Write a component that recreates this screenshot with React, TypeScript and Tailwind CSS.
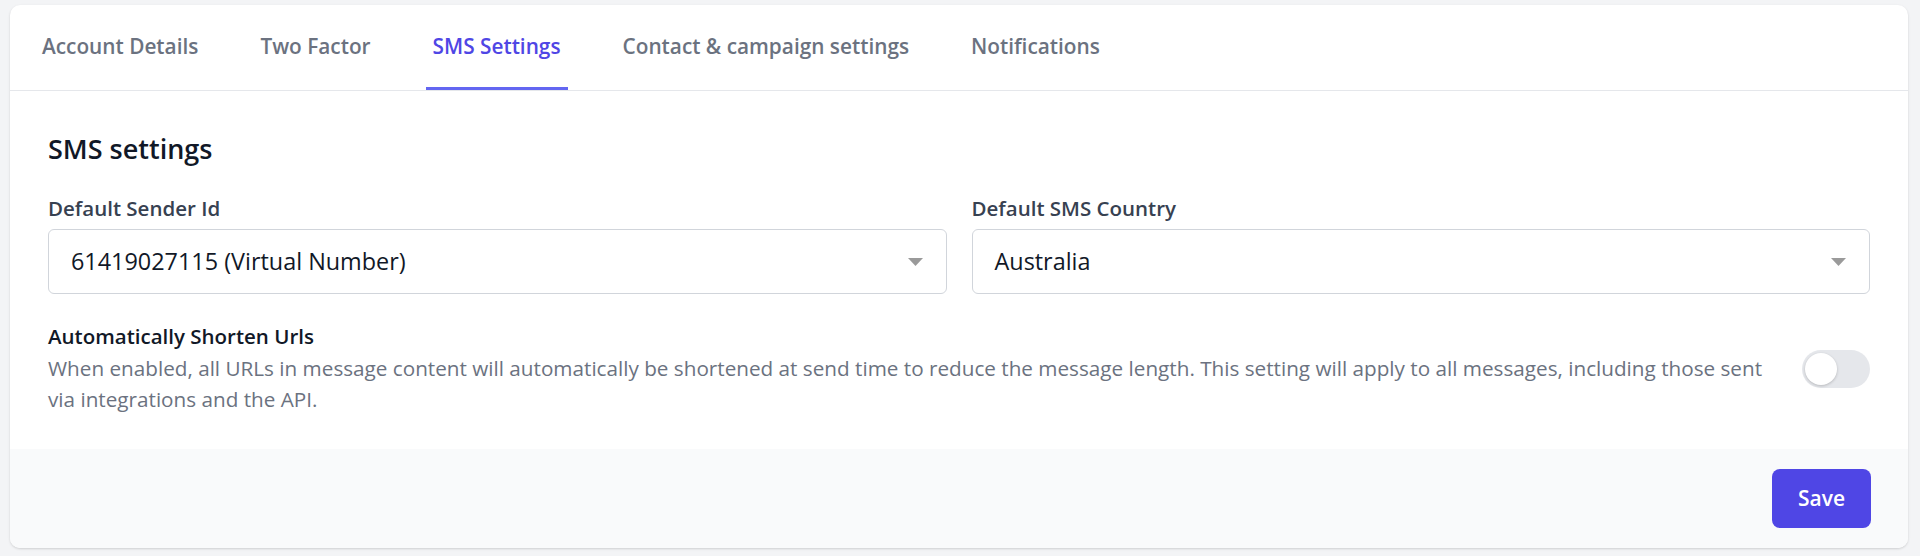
import React from "react";

const tabs = [
  { label: "Account Details", active: false },
  { label: "Two Factor", active: false },
  { label: "SMS Settings", active: true },
  { label: "Contact & campaign settings", active: false },
  { label: "Notifications", active: false },
];

function Caret() {
  return (
    <svg width="15" height="8" viewBox="0 0 15 8" aria-hidden="true">
      <path d="M0 0 L15 0 L7.5 8 Z" fill="#9a9a9a" />
    </svg>
  );
}

function SelectBox({ value }: { value: string }) {
  return (
    <div className="flex h-[65px] items-center justify-between rounded-[6px] border border-[#d1d5db] bg-white pl-[22px] pr-[23px]">
      <span className="text-[23.4px] text-[#111827]">{value}</span>
      <Caret />
    </div>
  );
}

export default function App() {
  return (
    <div
      className="min-h-[556px] bg-[#f3f4f6] pt-[5px] pl-[10px] pr-[12px] pb-[9px]"
      style={{ fontFamily: '"Open Sans", "Noto Sans", sans-serif' }}
    >
      <div className="overflow-hidden rounded-[10px] bg-white shadow-[0_1px_3px_rgba(0,0,0,0.1),0_1px_2px_rgba(0,0,0,0.06)]">
        <nav className="flex h-[86px] gap-[48px] border-b border-[#e5e7eb] pl-[25px]">
          {tabs.map((t) => (
            <div
              key={t.label}
              className={
                t.active
                  ? "flex items-center border-b-[3px] border-[#6366f1] px-[7px] pt-[2px] text-[20.8px] font-semibold text-[#4f46e5]"
                  : "flex items-center border-b-[3px] border-transparent px-[7px] pt-[2px] text-[20.8px] font-semibold text-[#6b7280]"
              }
            >
              {t.label}
            </div>
          ))}
        </nav>

        <div className="px-[38px] pt-[40px] pb-[34px]">
          <h2 className="text-[27px] font-semibold leading-[36px] text-[#111827]">SMS settings</h2>

          <div className="mt-[27px] grid grid-cols-2 gap-[25px]">
            <div>
              <label className="block text-[20.5px] font-semibold leading-[28px] text-[#374151]">
                Default Sender Id
              </label>
              <div className="mt-[7px]">
                <SelectBox value="61419027115 (Virtual Number)" />
              </div>
            </div>
            <div>
              <label className="block text-[20.5px] font-semibold leading-[28px] text-[#374151]">
                Default SMS Country
              </label>
              <div className="mt-[7px]">
                <SelectBox value="Australia" />
              </div>
            </div>
          </div>

          <div className="mt-[28px] flex items-center gap-[16px]">
            <div className="flex-1">
              <div className="text-[20.5px] font-semibold leading-[28px] text-[#111827]">
                Automatically Shorten Urls
              </div>
              <p className="mt-[3px] text-[20.7px] leading-[31px] text-[#6b7280]">
                When enabled, all URLs in message content will automatically be shortened at send time to reduce the
                message length. This setting will apply to all messages, including those sent via integrations and the
                API.
              </p>
            </div>
            <button
              type="button"
              className="flex h-[38px] w-[68px] shrink-0 items-center rounded-full bg-[#e5e7eb] px-[3px]"
              aria-pressed="false"
            >
              <span className="h-[32px] w-[32px] rounded-full bg-white shadow-[0_1px_3px_rgba(0,0,0,0.2)]" />
            </button>
          </div>
        </div>

        <div className="flex h-[99px] items-center justify-end bg-[#f9fafb] pr-[37px]">
          <button
            type="button"
            className="h-[59px] w-[99px] rounded-[8px] bg-[#4f46e5] text-[21px] font-semibold text-white"
          >
            Save
          </button>
        </div>
      </div>
    </div>
  );
}
